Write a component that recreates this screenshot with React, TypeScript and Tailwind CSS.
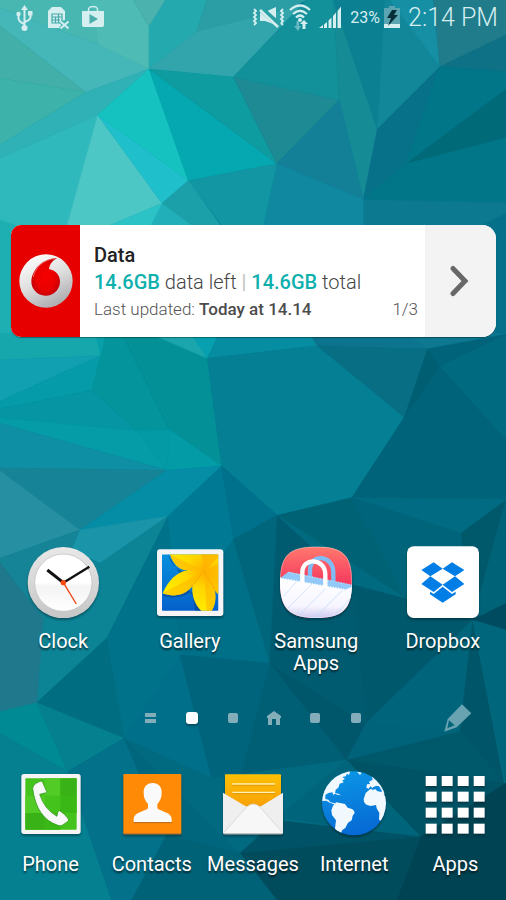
import type { ReactNode } from "react";

/* Wallpaper facets: [points, fill] on a 1518 x 2700 canvas */
const facets: [string, string][] = [
  ["0,0 275,0 297,135 0,25", "#49b7b1"],
  ["0,25 297,135 447,207 257,277 0,78", "#45b7b9"],
  ["270,0 400,0 447,80 447,207 297,135", "#4ebbb5"],
  ["400,0 497,0 447,80", "#4bb2ad"],
  ["497,0 620,0 590,95 447,207 447,80", "#24a9af"],
  ["620,0 920,0 868,25 590,95", "#2b9ea5"],
  ["590,95 868,25 900,20 700,231 447,207", "#32a5ac"],
  ["0,78 257,277 0,235", "#42afa9"],
  ["0,235 257,277 0,435", "#3db2ab"],
  ["0,435 257,277 447,207 293,345 0,475", "#30b1b5"],
  ["0,475 293,345 200,680 160,900 0,900", "#2fb9bc"],
  ["0,660 60,680 60,1050 0,1050", "#1eafb3"],
  ["293,345 486,610 320,680 200,680", "#4cc7c5"],
  ["293,345 565,542 486,610", "#1fbfcb"],
  ["447,207 293,345 565,542", "#15c2c0"],
  ["447,207 565,542 830,491", "#05a8b0"],
  ["447,207 700,231 830,491", "#0e9ca1"],
  ["700,231 1018,300 830,491", "#1d8a94"],
  ["700,231 920,0 1000,0 1018,300", "#12919a"],
  ["1000,0 1025,70 1132,388 1090,599 1018,300", "#148b95"],
  ["1000,0 1155,0 1132,388", "#0c8093"],
  ["1155,0 1180,0 1320,200 1132,388", "#118799"],
  ["1170,0 1300,0 1320,200", "#168ea3"],
  ["1300,0 1518,0 1518,105 1320,200", "#207c8a"],
  ["1518,105 1518,215 1320,200", "#0e7186"],
  ["1320,200 1132,388 1090,599 1217,492", "#08718a"],
  ["1320,200 1518,215 1518,268 1217,492", "#017688"],
  ["1217,492 1518,268 1518,413", "#006a79"],
  ["1217,492 1518,413 1518,608 1090,599", "#017688"],
  ["1090,599 1518,608 1518,1004 1085,1000", "#0d7990"],
  ["1450,675 1518,640 1518,1004 1480,1004", "#05708a"],
  ["830,491 1018,300 1090,599", "#138098"],
  ["830,491 1090,599 1085,1020 760,1020 790,675", "#0f88a0"],
  ["565,542 830,491 790,675 760,1020 665,675", "#1396a3"],
  ["565,542 665,680 580,680 486,610", "#1ba0a9"],
  ["486,610 580,680 450,680", "#21b0ba"],
  ["486,610 450,680 320,680", "#2cc3c6"],
  ["0,1000 290,1000 303,1067 0,1080", "#16a7ac"],
  ["0,1080 303,1067 0,1203", "#11a0b1"],
  ["303,1067 275,1171 0,1227 0,1203", "#069ba9"],
  ["0,1227 275,1171 413,1293 0,1253", "#0595a3"],
  ["285,1000 322,1000 303,1067", "#089fa8"],
  ["318,1000 370,1010 510,1293 413,1293 275,1171 303,1067", "#03949c"],
  ["366,1000 470,1000 622,1075 665,1398 510,1290", "#039097"],
  ["460,1005 580,1005 622,1075", "#1ba5ad"],
  ["575,1005 655,1005 622,1075", "#06a0b0"],
  ["655,1005 935,1005 952,1037 622,1075", "#068da1"],
  ["622,1075 952,1037 1213,1252 1055,1493 832,1546 665,1398", "#057f94"],
  ["930,1005 1230,1005 1283,1047 952,1037", "#0c748e"],
  ["1225,1005 1518,1000 1283,1047", "#0d7890"],
  ["952,1037 1283,1047 1213,1252", "#086e84"],
  ["1283,1047 1320,1100 1213,1252", "#005e72"],
  ["1283,1047 1518,1004 1320,1100", "#00637a"],
  ["1320,1100 1518,1004 1518,1320", "#006b80"],
  ["1320,1100 1518,1320 1518,1498 1055,1493 1213,1252", "#006379"],
  ["0,1253 413,1293 500,1410 0,1270", "#059ca7"],
  ["413,1293 510,1290 500,1411", "#0399a5"],
  ["510,1290 665,1398 500,1411", "#039ba6"],
  ["0,1270 500,1411 0,1403", "#0f8fa4"],
  ["0,1403 500,1411 240,1590 0,1412", "#168496"],
  ["500,1411 665,1398 505,1548 240,1590", "#058da6"],
  ["0,1412 240,1590 0,1675", "#268fa1"],
  ["0,1675 240,1590 215,1650 130,1860 0,1688", "#148496"],
  ["240,1590 505,1548 300,1690 215,1650", "#1994a8"],
  ["505,1548 320,1915 110,2108 130,1860 215,1650 300,1690", "#0d8496"],
  ["0,1688 130,1860 110,2108 0,2135", "#20788c"],
  ["505,1548 515,1650 540,1965 372,2215 320,1915", "#00738b"],
  ["505,1548 665,1398 700,1618 540,1965", "#007a94"],
  ["665,1398 832,1546 700,1618", "#00718c"],
  ["530,1850 700,1618 810,1990 540,1965", "#006f88"],
  ["110,2108 320,1915 372,2215", "#006d80"],
  ["0,2135 110,2108 203,2315 0,2200", "#008b94"],
  ["110,2108 372,2215 203,2315", "#04808f"],
  ["0,2200 203,2315 335,2700 0,2700", "#058091"],
  ["203,2315 372,2215 500,2500 395,2700 335,2700", "#037189"],
  ["540,1965 372,2215 635,2335", "#006f89"],
  ["540,1965 810,1990 720,2340 635,2335", "#00657c"],
  ["810,1990 1040,2280 720,2340", "#005f74"],
  ["810,1990 1098,2170 1040,2280", "#00576b"],
  ["372,2215 720,2560 500,2510", "#00667d"],
  ["372,2215 635,2335 1040,2280 720,2560", "#026a80"],
  ["700,1618 832,1546 810,1990", "#00667b"],
  ["832,1546 1060,1755 1098,2170 810,1990", "#005b70"],
  ["832,1546 1055,1493 1215,1650 1215,1795", "#006375"],
  ["832,1546 1215,1795 1060,1755", "#006b80"],
  ["1055,1493 1518,1498 1383,1600", "#006b82"],
  ["1055,1493 1383,1600 1418,1860 1215,1795", "#00657a"],
  ["1383,1600 1518,1500 1418,1860", "#00596b"],
  ["1518,1498 1518,1810 1418,1860", "#006378"],
  ["1418,1860 1518,1810 1518,1890", "#004b60"],
  ["1060,1755 1215,1795 1418,1860 1098,2170", "#00586c"],
  ["1418,1860 1098,2170 1380,2195", "#00657a"],
  ["1418,1860 1512,2350 1380,2195", "#005668"],
  ["1418,1860 1518,1890 1518,2360", "#00667b"],
  ["1040,2280 1098,2170 1380,2195", "#00637a"],
  ["1040,2280 1380,2195 1512,2350", "#00596b"],
  ["1040,2280 1518,2350 1262,2510", "#005365"],
  ["1040,2280 1262,2510 830,2455", "#00657a"],
  ["720,2560 830,2460 1262,2510", "#005366"],
  ["1262,2510 1518,2350 1518,2700 1190,2700", "#004352"],
  ["720,2560 1262,2510 1190,2700 830,2700", "#004b5c"],
  ["500,2505 720,2560 830,2700 395,2700", "#006277"],
];

function Wallpaper() {
  return (
    <svg
      aria-hidden="true"
      className="absolute inset-0 -z-10 h-full w-full"
      viewBox="0 0 1518 2700"
      preserveAspectRatio="none"
    >
      {facets.map(([points, fill]) => (
        <polygon key={points} points={points} fill={fill} stroke={fill} strokeWidth={1.5} />
      ))}
    </svg>
  );
}

function StatusBar() {
  return (
    <header className="flex h-9 items-center justify-between pr-2 pl-4 text-[#d5eef0]">
      <div className="flex items-center gap-3">
        <svg aria-label="USB connected" className="h-7 w-5" viewBox="0 0 20 28" fill="none" stroke="currentColor" strokeWidth="2">
          <path d="M8.500 4v20M2.500 10v4q0 4 6 6M14.500 10v3q0 3-6 5" />
          <path d="M5 6l3.500-5L12 6z" fill="currentColor" stroke="none" />
          <circle cx="8.500" cy="24" r="3" fill="currentColor" stroke="none" />
          <circle cx="2.500" cy="10" r="2.200" fill="currentColor" stroke="none" />
          <rect x="12" y="7" width="4.500" height="4.500" fill="currentColor" stroke="none" />
        </svg>
        <svg aria-label="No SIM card" className="h-6 w-[22px]" viewBox="0 0 22 24">
          <path d="M4 1h9l4 4v9l-4 1v7H0V5z" fill="currentColor" />
          <path d="M4 8h10v9H4zM4 11h10M4 14h8M7.500 11v6M10.500 8v9" fill="none" stroke="#45aaaa" strokeWidth="1.200" />
          <path d="M12.500 15.500l8 7M20.500 15.500l-8 7" stroke="#48b7b6" strokeWidth="4" />
          <path d="M12.500 15.500l8 7M20.500 15.500l-8 7" stroke="currentColor" strokeWidth="2" />
        </svg>
        <svg aria-label="Play Store" className="h-6 w-[22px]" viewBox="0 0 22 24">
          <path d="M6.500 6V3.500a4.500 3 0 0 1 9 0V6" fill="none" stroke="currentColor" strokeWidth="1.500" />
          <path d="M0 5h22v14q0 2-2 2H2q-2 0-2-2z" fill="currentColor" />
          <path d="M7.500 8l8.500 5-8.500 5z" fill="#4aaead" />
        </svg>
      </div>
      <div className="flex items-center">
        <svg aria-label="Vibrate" className="mr-1 h-6 w-[33px]" viewBox="0 0 33 24">
          <path d="M2 3l2 2-2 2 2 2-2 2 2 2-2 2 2 2-2 2M31 3l-2 2 2 2-2 2 2 2-2 2 2 2-2 2 2 2" fill="none" stroke="currentColor" strokeWidth="1.800" />
          <path d="M8 6h5l11-5v18l-11-4H8z" fill="currentColor" />
          <path d="M8 2l19 17" stroke="#2ba0a5" strokeWidth="6" />
          <path d="M8 4l18 17" stroke="currentColor" strokeWidth="2.500" />
        </svg>
        <svg aria-label="Wi-Fi" className="mr-2 h-7 w-[22px]" viewBox="0 0 22 28">
          <path d="M1 6q10-9 20 0M4 10q7-6.500 14 0M7 13.500q4-4 8 0" fill="none" stroke="currentColor" strokeWidth="2.300" />
          <circle cx="11" cy="16" r="2" fill="currentColor" />
          <path d="M7.500 17v5H5l4 5 3-5h-2v-5z" fill="#69bac0" />
          <path d="M13.500 25v-5H11l4-4 4 4h-2.500v5z" fill="currentColor" />
        </svg>
        <svg aria-label="Signal" className="mr-2 h-6 w-[23px]" viewBox="0 0 23 24" fill="currentColor">
          <path d="M0 22l4-3v3zM5 18.500l3-2.500v6H5zM9.500 14.500l3-3V22h-3zM14 10l3-3.500V22h-3zM18.500 5L22 .500V22h-3.500z" />
        </svg>
        <span className="mr-1 text-base leading-6">23%</span>
        <svg aria-label="Charging" className="mr-2 h-6 w-4" viewBox="0 0 16 24">
          <path d="M5 0h6v2h5v17H0V2h5z" fill="#5aa5b1" />
          <path d="M0 18h16v4H0z" fill="currentColor" />
          <path d="M8 4h5l-3 5h4L4 20l3-8H3z" fill="#082f38" />
        </svg>
        <time className="text-[25px] leading-8 font-light">2:14 PM</time>
      </div>
    </header>
  );
}

function DataWidget() {
  return (
    <section
      aria-label="Data usage"
      className="mt-[189px] mr-[10px] ml-[11px] flex h-28 shrink-0 overflow-hidden rounded-l-[10px] rounded-r-[14px] bg-white shadow-[0_1px_1px_rgba(0,0,0,0.35)]"
    >
      <div className="flex w-[69px] shrink-0 items-center justify-center bg-[#e60000]">
        <svg aria-label="Vodafone" className="h-14 w-14" viewBox="0 0 168 168">
          <defs>
            <linearGradient id="silver" x1="0.2" y1="0" x2="0.7" y2="1">
              <stop offset="0" stopColor="#fff" />
              <stop offset="0.5" stopColor="#dedede" />
              <stop offset="1" stopColor="#a9a9ad" />
            </linearGradient>
            <radialGradient id="ruby">
              <stop offset="0" stopColor="#f70000" />
              <stop offset="0.7" stopColor="#e80000" />
              <stop offset="1" stopColor="#c90008" />
            </radialGradient>
          </defs>
          <circle cx="84" cy="84" r="80" fill="url(#silver)" />
          <path d="M118 16C80 14 44 44 40 84a43 43 0 0 0 86 2c0-20-14-34-33-38 2-14 11-26 25-32z" fill="url(#ruby)" />
          <path d="M112 17C78 18 50 45 46 72" fill="none" stroke="#ffa0a0" strokeWidth="3" opacity="0.6" />
        </svg>
      </div>
      <div className="min-w-0 flex-1 pt-4 pr-[7px] pl-[14px]">
        <h1 className="text-xl leading-7 font-medium text-[#222]">Data</h1>
        <p className="text-xl leading-[26px] font-light text-[#444]">
          <strong className="font-medium text-[#0eb0ae]">14.6GB</strong> data left{" "}
          <span className="font-medium text-[#c4c4c4]">|</span>{" "}
          <strong className="font-medium text-[#0eb0ae]">14.6GB</strong> total
        </p>
        <p className="flex justify-between text-[17px] leading-7 font-light text-[#555]">
          <span>
            Last updated: <b className="font-medium text-[#4c4c4c]">Today at 14.14</b>
          </span>
          <span>1/3</span>
        </p>
      </div>
      <button type="button" aria-label="Next" className="flex w-[71px] shrink-0 items-center justify-center bg-[#f3f3f3]">
        <svg className="mr-1 h-8 w-5" viewBox="0 0 20 32" fill="none" stroke="#686868" strokeWidth="5" strokeLinecap="round" strokeLinejoin="miter">
          <path d="M4 3.500L16 16 4 28.500" />
        </svg>
      </button>
    </section>
  );
}

const shade = "drop-shadow-[0_2px_1px_rgba(0,20,30,0.4)]";

function ClockIcon() {
  return (
    <svg className={`size-[72px] ${shade}`} viewBox="0 0 216 216">
      <defs>
        <linearGradient id="rim" x2="0" y2="1">
          <stop offset="0" stopColor="#e8e8e8" />
          <stop offset="1" stopColor="#c6c6c6" />
        </linearGradient>
        <linearGradient id="dial" x2="0" y2="1">
          <stop offset="0.500" stopColor="#fff" />
          <stop offset="0.560" stopColor="#f4f4f4" />
          <stop offset="1" stopColor="#fff" />
        </linearGradient>
      </defs>
      <circle cx="109" cy="110" r="107" fill="url(#rim)" />
      <circle cx="109" cy="110" r="86" fill="url(#dial)" stroke="#bbb" strokeWidth="2" />
      <path d="M109 110L61 72" stroke="#111" strokeWidth="9" />
      <path d="M109 110L187 62" stroke="#111" strokeWidth="7" />
      <path d="M109 110l39 64" stroke="#f04010" strokeWidth="4" />
      <circle cx="109" cy="110" r="8" fill="#ff4a10" />
    </svg>
  );
}

function GalleryIcon() {
  return (
    <svg className={`size-[72px] ${shade}`} viewBox="0 0 216 216">
      <defs>
        <linearGradient id="sea" x2="0" y2="1">
          <stop offset="0" stopColor="#0890dd" />
          <stop offset="1" stopColor="#0460cc" />
        </linearGradient>
        <radialGradient id="petal" gradientUnits="userSpaceOnUse" cx="150" cy="75" r="120">
          <stop offset="0" stopColor="#ffb000" />
          <stop offset="0.450" stopColor="#ffd800" />
          <stop offset="1" stopColor="#ffea00" />
        </radialGradient>
        <clipPath id="photo">
          <rect x="24" y="25" width="169" height="169" rx="3" />
        </clipPath>
      </defs>
      <rect x="9" y="10" width="199" height="200" rx="9" fill="#f6f4f6" />
      <g clipPath="url(#photo)">
        <rect x="24" y="25" width="170" height="170" fill="url(#sea)" />
        <path d="M42 25C50 58 76 80 104 78 72 80 44 104 27 150c28 8 60 6 88-14l8 60h20z" fill="#043f88" opacity="0.55" />
        <path d="M48 25C56 55 78 74 102 73 70 76 42 104 26 142c30 12 66 8 89-21-2 30 8 56 27 74h31c12-20 14-42 9-64 4 8 8 12 12 14V25z" fill="url(#petal)" />
        <path d="M150 75L26 142c30 12 66 8 89-21z" fill="#ffb400" opacity="0.5" />
        <path d="M150 75L48 25C56 55 78 74 102 73z" fill="#ffb900" opacity="0.6" />
        <path d="M150 75l8 120h15c12-20 14-42 9-64z" fill="#ffad00" opacity="0.5" />
        <path d="M150 75l44-22v92c-4-2-8-6-12-14z" fill="#ffb000" opacity="0.6" />
        <path d="M150 75l-8-50h52v8z" fill="#ffae00" opacity="0.6" />
        <path d="M150 75l-35 46M150 75l32 56" stroke="#f5a200" strokeWidth="2" />
      </g>
    </svg>
  );
}

function SamsungAppsIcon() {
  return (
    <svg className={`size-[72px] ${shade}`} viewBox="0 0 216 216">
      <defs>
        <linearGradient id="coral" x2="0" y2="1">
          <stop offset="0" stopColor="#ff7a6e" />
          <stop offset="0.600" stopColor="#f5305c" />
        </linearGradient>
        <linearGradient id="bag" x2="0" y2="1">
          <stop offset="0" stopColor="#fff" />
          <stop offset="0.700" stopColor="#f7f6ff" />
          <stop offset="1" stopColor="#cfc9ef" />
        </linearGradient>
        <clipPath id="squircle">
          <path d="M108 2c78 0 108 22 108 106S186 216 108 216 0 190 0 108 30 2 108 2z" />
        </clipPath>
      </defs>
      <g clipPath="url(#squircle)">
        <rect width="216" height="216" fill="url(#coral)" />
        <path d="M90 102V74c0-54 70-48 70 6v34" fill="none" stroke="#7fbdf6" strokeWidth="13" />
        <path d="M0 97l25-20 191 40v40L0 130z" fill="#93c9f8" />
        <path d="M25 79L216 117" stroke="#b4dafa" strokeWidth="4" strokeDasharray="4 4" />
        <path d="M0 97L195 131 216 122V216H0z" fill="url(#bag)" />
        <path d="M0 97L195 131" stroke="#fff" strokeWidth="5" strokeDasharray="4 4" />
        <path d="M50 106L10 152M95 114L22 188M142 122L54 212M188 132L102 218M216 152l-60 66" stroke="#bcd8f7" strokeWidth="2" />
        <path d="M67 110V80c0-48 69-44 69 6v36" fill="none" stroke="#fff" strokeWidth="13" strokeLinecap="round" />
      </g>
      <path d="M108 3c77 0 107 22 107 105S186 215 108 215 1 190 1 108 30 3 108 3z" fill="none" stroke="#fff" strokeWidth="3" opacity="0.35" />
    </svg>
  );
}

function DropboxIcon() {
  return (
    <svg className={`size-[72px] ${shade}`} viewBox="0 0 216 216">
      <rect x="0" y="1" width="216" height="215" rx="20" fill="#fff" />
      <path
        d="M80 49l27 19-37 23-27-19zM135 49l37 23-28 19-37-23zM70 91l37 25-27 22-37-24zM144 91l28 23-37 24-28-22zM69 137l11 7 27-22 28 22 11-7v8l-39 25-38-25z"
        fill="#007ee5"
      />
    </svg>
  );
}

function PhoneIcon() {
  return (
    <svg className={`size-[66px] ${shade}`} viewBox="0 0 198 198">
      <rect x="10" y="9" width="178" height="180" rx="8" fill="#f5f5f5" />
      <rect x="22" y="22" width="154" height="154" rx="3" fill="#43c31c" />
      <path d="M80 22h47v52H80zM22 74h58v52H22z" fill="#52cb26" />
      <path d="M127 22h49v52h-49zM22 126h58v50H22z" fill="#38b216" />
      <path d="M80 126h47v50H80zM127 74h49v52h-49z" fill="#3ab916" />
      <path
        d="M44 52Q45 44 54 37l12-6q5-2 8 3l12 28q0 4-5 4l-16 4q14 45 52 66 0-14 8-17 16 10 26 25 2 4-3 8l-14 10q-6 4-14 1Q56 143 44 52z"
        fill="#f8f8f8"
        stroke="#2b8f18"
        strokeWidth="2"
      />
    </svg>
  );
}

function ContactsIcon() {
  return (
    <svg className={`size-[66px] ${shade}`} viewBox="0 0 198 198">
      <rect x="13" y="9" width="174" height="181" rx="3" fill="#ff8a05" />
      <path d="M14 188h172" stroke="#c9702a" strokeWidth="3" />
      <path
        d="M101 36c18 0 28 13 27 30 0 15-5 25-13 33v13c10 10 40 11 43 30v12H44v-12c3-19 33-20 43-30V99c-8-8-13-18-13-33-1-17 9-30 27-30z"
        fill="#fafafa"
      />
      <path d="M44 155h114" stroke="#b5651a" strokeWidth="3" />
    </svg>
  );
}

function MessagesIcon() {
  return (
    <svg className={`size-[66px] ${shade}`} viewBox="0 0 198 198">
      <defs>
        <linearGradient id="note" x2="0" y2="1">
          <stop offset="0" stopColor="#fcc004" />
          <stop offset="1" stopColor="#f79a08" />
        </linearGradient>
      </defs>
      <rect x="15" y="10" width="168" height="120" rx="3" fill="url(#note)" />
      <path d="M37 39h128M37 64h128" stroke="#fff1b5" strokeWidth="4" />
      <path d="M37 43h128M37 68h128" stroke="#d98c06" strokeWidth="2" />
      <path d="M9 65l68 41h46l66-41v120q0 4-4 4H13q-4 0-4-4z" fill="#efefef" />
      <path d="M11 185L80 108q20-18 40 0l68 77q-1 4-5 4H15q-4 0-4-4z" fill="#f7f7f7" stroke="#cfcfcf" strokeWidth="2" />
      <path d="M11 188h176" stroke="#b9b9b9" strokeWidth="3" />
    </svg>
  );
}

function InternetIcon() {
  return (
    <svg className={`size-[66px] ${shade}`} viewBox="0 0 198 198">
      <defs>
        <linearGradient id="ocean" x1="0.300" x2="0.600" y2="1">
          <stop offset="0" stopColor="#0b96e6" />
          <stop offset="1" stopColor="#0668d4" />
        </linearGradient>
        <clipPath id="globe">
          <circle cx="99" cy="97" r="96" />
        </clipPath>
      </defs>
      <circle cx="99" cy="97" r="96" fill="url(#ocean)" />
      <g clipPath="url(#globe)" fill="#f1f9ff">
        <path d="M0 90L0 0H88l-4 12-6-4-4 8-10 2 8 6-8 4 4 6-12 4-4 12-8 6-2 12-5 4-3-8-12 2-9 6v12l9 2 6 8 14 3 2 4-16-5-12-7z" />
        <path d="M36 104l10-10 16 3 10 2 8 11 13 4q8 4 8 12l-6 8-3 14-11 7-8 16-9 6-6 13-12-6-4-12 3-24-12-16-2-14z" />
        <path d="M128 84l6-18 14-12 16-1 4 7 16 2 12 20v40l-15 28-7-4 1-20-8-14-2-10-16 3-13-4-7-8z" />
        <path d="M136 50l2-10 9-1-3-7 11-6-4-14 40 30 10 30-16-4-4-12-10-6 4-5-13 2-8 4-6-5-5 7z" />
        <path d="M38 65l14 3 8 5-12-2zM108 2l14 3-5 7z" />
      </g>
      <path d="M151 57l14-2 4 5 12 2-4-13-10-5-10 4z" fill="#0b88df" />
    </svg>
  );
}

function AppsIcon() {
  return (
    <svg className={`size-[66px] ${shade}`} viewBox="0 0 198 198" fill="#fff">
      {[15, 62, 110, 158].map((y) =>
        [11, 59, 107, 155].map((x) => <rect key={`${x}-${y}`} x={x} y={y} width="33" height="30" />),
      )}
    </svg>
  );
}

function Launcher({ icon, label, dock = false }: { icon: ReactNode; label: string; dock?: boolean }) {
  return (
    <button
      type="button"
      className={`flex flex-col items-center text-xl leading-[22px] text-white [text-shadow:0_2px_2px_rgba(0,0,0,0.6)] ${dock ? "gap-4" : "gap-3"}`}
    >
      {icon}
      <span className={dock ? "" : "max-w-[100px]"}>{label}</span>
    </button>
  );
}

const pageStyle = "flex h-[30px] w-[41px] items-center justify-center";

function PageIndicator() {
  return (
    <div className="mt-[29px] grid grid-cols-[1fr_auto_1fr] items-center text-[#83adb8]">
      <nav aria-label="Home screens" className="col-start-2 flex">
        <button type="button" aria-label="Briefing" className={pageStyle}>
          <svg className="h-3 w-[11px]" viewBox="0 0 11 12" fill="currentColor">
            <path d="M0 1h11v4H0zM0 7h11v4H0z" />
          </svg>
        </button>
        <button type="button" aria-label="Page 1" aria-current="page" className={pageStyle}>
          <span className="size-3 rounded-[3px] bg-white shadow-[0_2px_2px_rgba(0,0,0,0.3)]" />
        </button>
        <button type="button" aria-label="Page 2" className={pageStyle}>
          <span className="size-[10px] rounded-[2px] bg-current" />
        </button>
        <button type="button" aria-label="Home page" className={pageStyle}>
          <svg className="h-[14px] w-[14px]" viewBox="0 0 14 14" fill="currentColor">
            <path d="M7 0l7 5v2h-1v7H9V8H5v6H1V7H0V5z" />
          </svg>
        </button>
        <button type="button" aria-label="Page 4" className={pageStyle}>
          <span className="size-[10px] rounded-[2px] bg-current" />
        </button>
        <button type="button" aria-label="Page 5" className={pageStyle}>
          <span className="size-[10px] rounded-[2px] bg-current" />
        </button>
      </nav>
      <button type="button" aria-label="Edit" className="mr-[34px] justify-self-end">
        <svg className="h-7 w-7" viewBox="0 0 84 84" fill="#69a3b1">
          <path fillRule="evenodd" d="M54 1l28 27-44 42L1 83l10-38zM15 49l-5 24 22-9z" />
        </svg>
      </button>
    </div>
  );
}

export default function App() {
  return (
    <main className="relative isolate flex min-h-screen flex-col overflow-hidden bg-[#00738b] font-[Roboto,'Liberation_Sans',sans-serif]">
      <Wallpaper />
      <StatusBar />
      <DataWidget />
      <div className="mt-auto pt-12">
        <div className="grid grid-cols-4">
          <Launcher icon={<ClockIcon />} label="Clock" />
          <Launcher icon={<GalleryIcon />} label="Gallery" />
          <Launcher icon={<SamsungAppsIcon />} label="Samsung Apps" />
          <Launcher icon={<DropboxIcon />} label="Dropbox" />
        </div>
        <PageIndicator />
        <div className="mt-[38px] grid grid-cols-5 pb-[25px]">
          <Launcher dock icon={<PhoneIcon />} label="Phone" />
          <Launcher dock icon={<ContactsIcon />} label="Contacts" />
          <Launcher dock icon={<MessagesIcon />} label="Messages" />
          <Launcher dock icon={<InternetIcon />} label="Internet" />
          <Launcher dock icon={<AppsIcon />} label="Apps" />
        </div>
      </div>
    </main>
  );
}
